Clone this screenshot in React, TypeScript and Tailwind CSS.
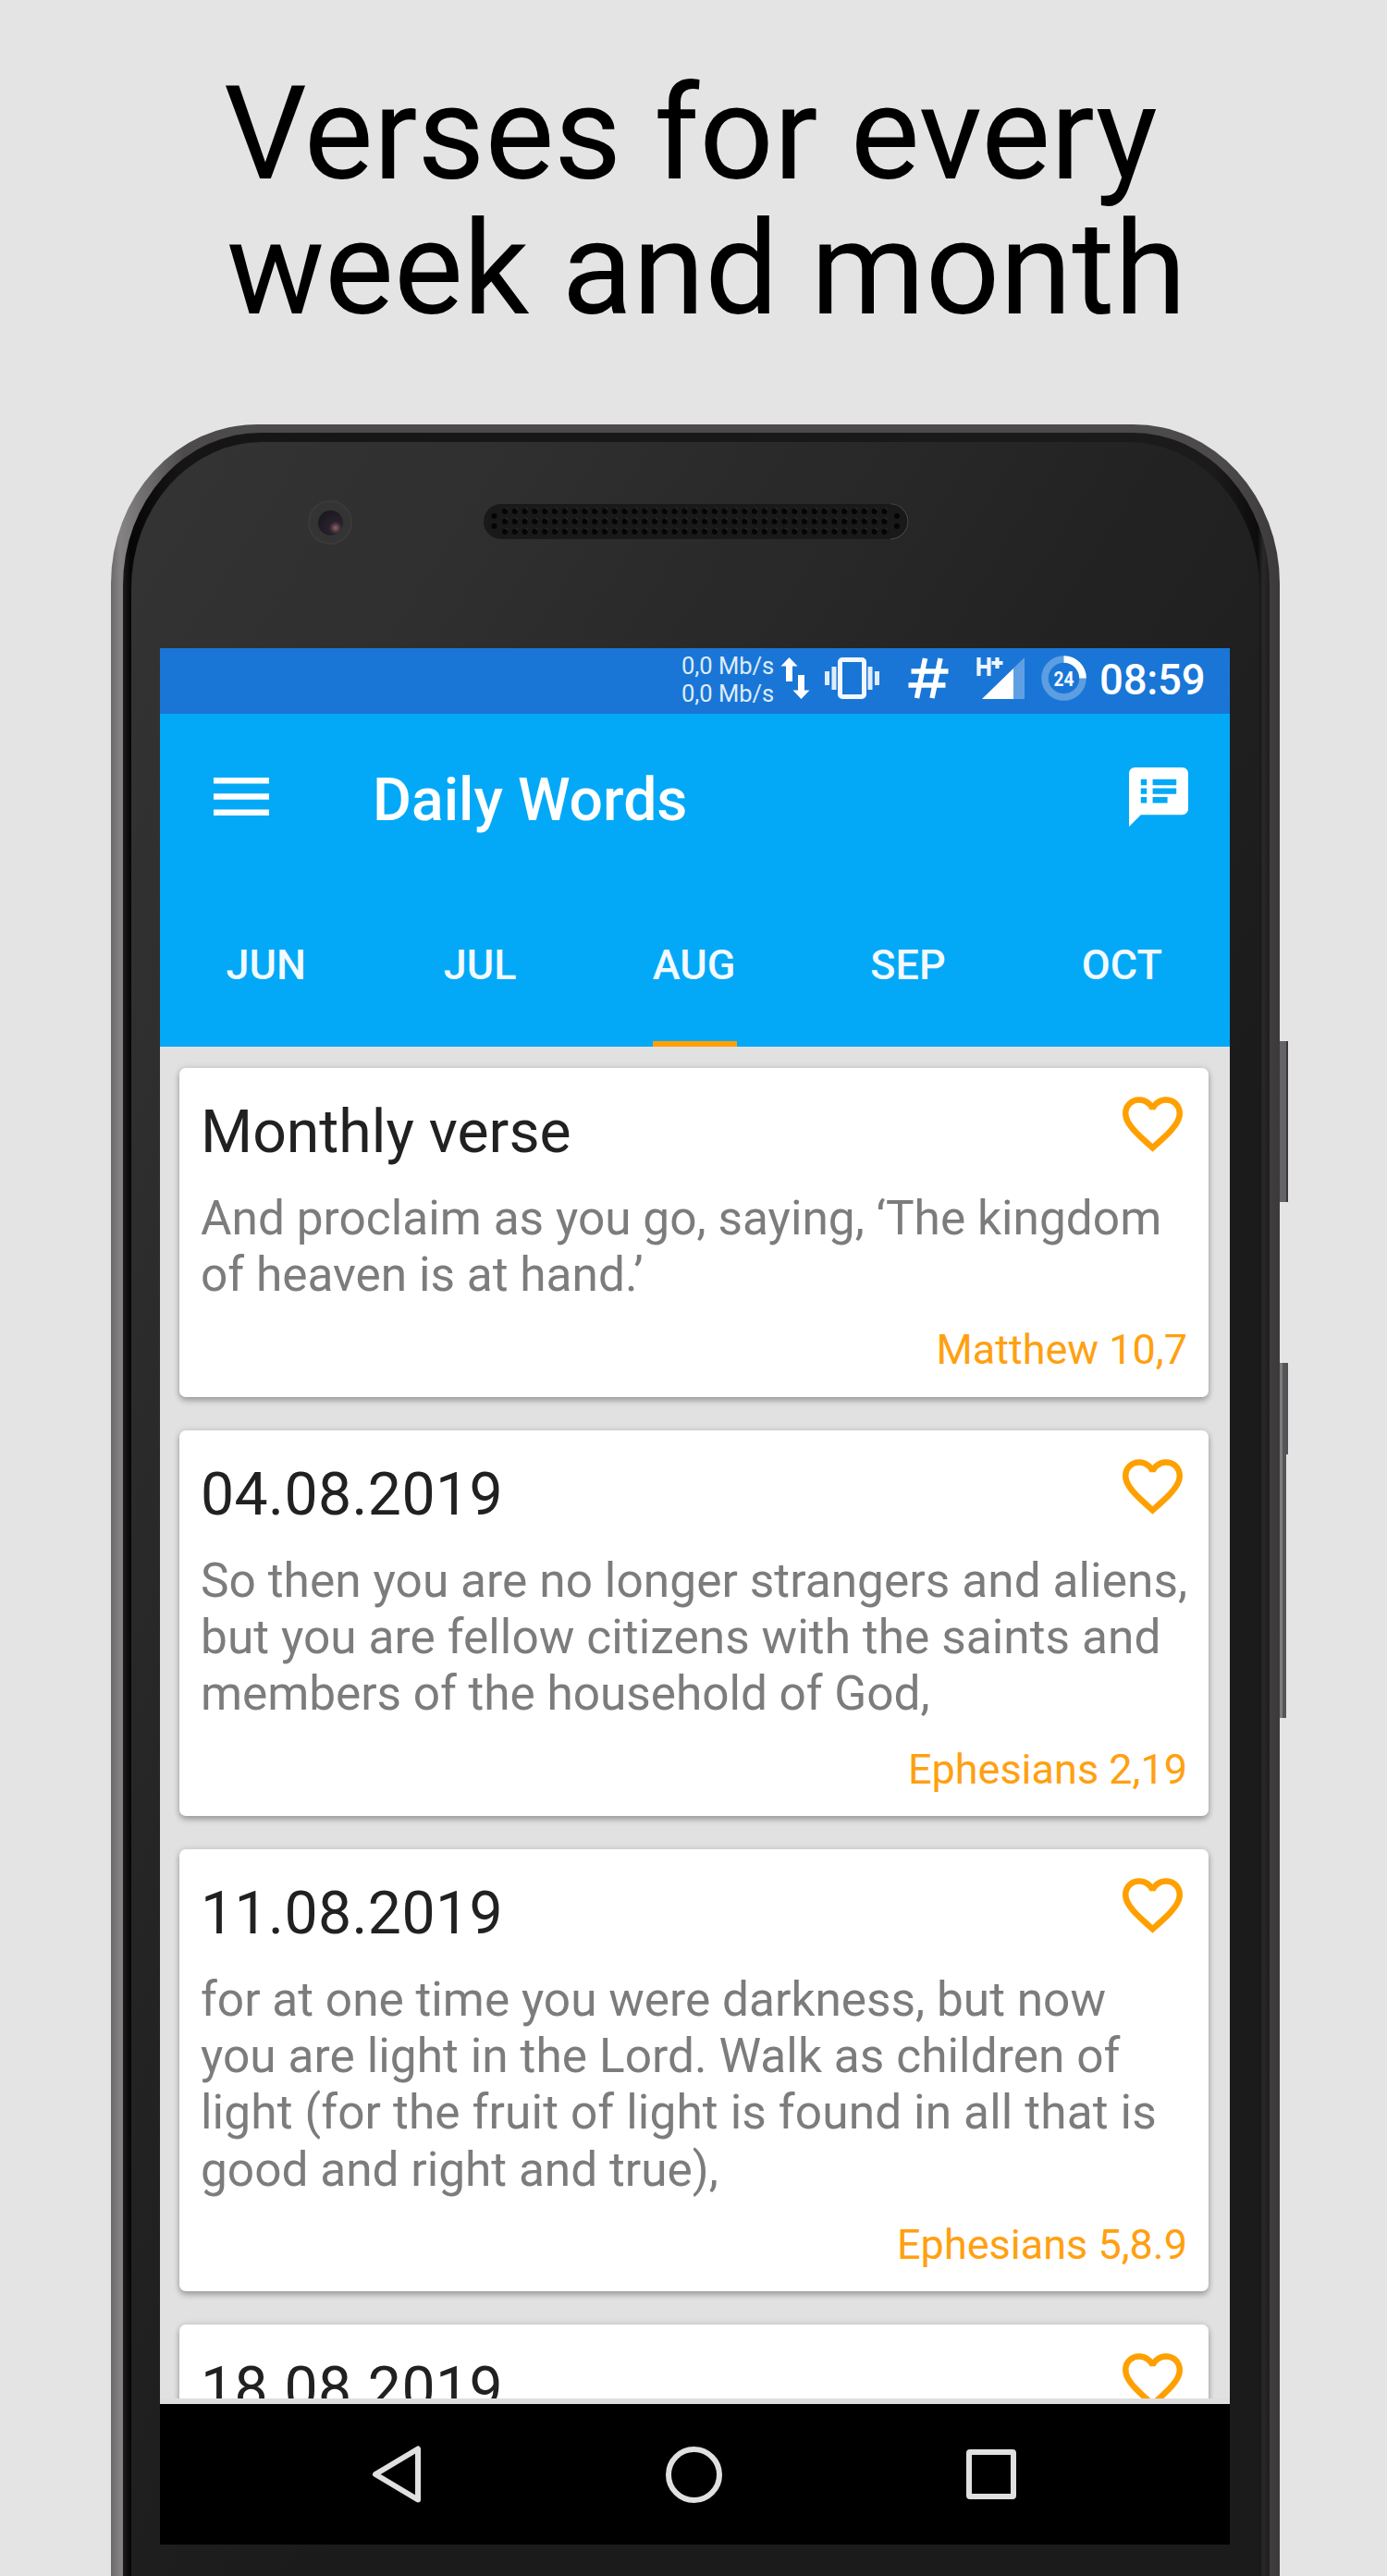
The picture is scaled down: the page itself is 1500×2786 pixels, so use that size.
import type { ReactNode } from "react";

const HEART =
  "M16.5 3c-1.74 0-3.41.81-4.5 2.09C10.91 3.81 9.24 3 7.5 3 4.42 3 2 5.42 2 8.5c0 3.78 3.4 6.86 8.55 11.54L12 21.35l1.45-1.32C18.6 15.36 22 12.28 22 8.5 22 5.42 19.58 3 16.5 3zm-4.4 15.55l-.1.1-.1-.1C7.14 14.24 4 11.39 4 8.5 4 6.5 5.5 5 7.5 5c1.54 0 3.04.99 3.57 2.36h1.87C13.46 5.99 14.96 5 16.5 5c2 0 3.5 1.5 3.5 3.5 0 2.89-3.14 5.74-7.9 10.05z";

const NOTES =
  "M20 2H4c-1.1 0-1.99.9-1.99 2L2 22l4-4h14c1.1 0 2-.9 2-2V4c0-1.1-.9-2-2-2zM8 14H6v-2h2v2zm0-3H6V9h2v2zm0-3H6V6h2v2zm7 6h-5v-2h5v2zm3-3h-8V9h8v2zm0-3h-8V6h8v2z";

type Line = { text: string; tracking?: string };

function VerseCard({
  title,
  titleTracking = "tracking-[0.4px]",
  lines,
  source,
  className,
}: {
  title: string;
  titleTracking?: string;
  lines: Line[];
  source: string;
  className: string;
}) {
  return (
    <article
      className={`flex w-[1113px] shrink-0 flex-col rounded-[7px] bg-white px-[23px] shadow-[0_4px_6px_rgba(0,0,0,0.26),0_0_7px_rgba(0,0,0,0.13)] ${className}`}
    >
      <div className="flex items-start justify-between pt-[31px]">
        <h2 className={`mt-px text-[64.3px] leading-[75px] whitespace-nowrap text-[#212121] ${titleTracking}`}>
          {title}
        </h2>
        <svg viewBox="2 3 20 18.35" className="mr-[5px] h-[60px] w-[65px]" fill="#ffa000">
          <path d={HEART} />
        </svg>
      </div>
      <div className="mt-[25px] text-[51.4px] leading-[61.2px] whitespace-nowrap text-[#7c7c7c]">
        {lines.map((line) => (
          <p key={line.text} className={line.tracking}>
            {line.text}
          </p>
        ))}
      </div>
      <p className="mt-[24px] text-right text-[45px] leading-[53px] text-[#ffa010]">{source}</p>
    </article>
  );
}

function Tab({ children, active }: { children: ReactNode; active?: boolean }) {
  return (
    <div className="flex flex-1 flex-col items-center">
      <span className="mt-[65px] mr-[2px] text-[45px] leading-[53px] font-medium text-[#f2faff]">{children}</span>
      {active && <span className="mt-auto mr-[1px] h-[6px] w-[91px] bg-[#ffa000]" />}
    </div>
  );
}

function StatusBar() {
  return (
    <div className="flex h-[71px] items-start bg-[#1976d6] text-white">
      <div className="ml-[564px] w-[107px] pt-[4px] text-[25.5px] leading-[30.3px] whitespace-nowrap text-[#dfecfa]">
        <p>0,0 Mb/s</p>
        <p>0,0 Mb/s</p>
      </div>
      <svg className="mt-[10px] h-[45px] w-[32px]" viewBox="0 0 32 45" fill="white">
        <path d="M9.500 0L18.500 9.500H13V26H6V9.500H0.500Z" />
        <path d="M22.500 45L13.500 35.500H19V19H26V35.500H31.500Z" />
      </svg>
      <svg className="mt-[10px] ml-[16px] h-[45px] w-[59px]" viewBox="0 0 59 45">
        <rect x="16.500" y="2.500" width="26" height="40" rx="2.500" fill="none" stroke="#f2f8fe" strokeWidth="5" />
        <path d="M0 15h5v15H0zM7.500 10h5v25h-5zM46.500 10h5v25h-5zM54 15h5v15h-5z" fill="#dfecfa" />
      </svg>
      <svg className="mt-[10px] ml-[31px] h-[45px] w-[44px]" viewBox="0 0 44 45" fill="none" stroke="white">
        <path d="M18.500 1L9.500 44M35 1L26 44M3.500 15H43.500M0.500 30H40.500" strokeWidth="5.500" />
      </svg>
      <svg className="mt-[8px] ml-[30px] h-[48px] w-[53px]" viewBox="0 0 53 48">
        <path d="M52 2V47H6Z" fill="#5fa0e2" />
        <path d="M40 14V47H6Z" fill="white" />
        <path d="M2.500 2v20M13.500 2v20M2.500 12h11M16.500 8h12M22.500 2v12" fill="none" stroke="#eef5fd" strokeWidth="4.200" />
      </svg>
      <svg className="mt-[8px] ml-[17px] h-[49px] w-[49px]" viewBox="0 0 49 49">
        <circle cx="24.500" cy="24.500" r="20.500" fill="none" stroke="#5c9ee1" strokeWidth="7.500" />
        <path d="M24.500 4A20.500 20.500 0 0 1 45 24.500" fill="none" stroke="white" strokeWidth="7.500" />
        <text x="24.500" y="32.500" textAnchor="middle" textLength="22" lengthAdjust="spacingAndGlyphs" fill="#f4f9fe" className="font-['Roboto',sans-serif] text-[22px] font-bold">
          24
        </text>
      </svg>
      <span className="mt-[8px] ml-[14px] text-[45.5px] leading-[54px] font-medium tracking-[-0.2px]">08:59</span>
    </div>
  );
}

export default function App() {
  return (
    <div className="relative h-[2786px] w-[1500px] overflow-hidden bg-[#e4e4e4] font-['Roboto',sans-serif]">
      <h1 className="h-[459px] pt-[72px] pl-[242px] text-[141.2px] leading-[146px] whitespace-nowrap text-black">
        <span className="block">Verses for every</span>
        <span className="block pl-[3px]">week and month</span>
      </h1>

      {/* side buttons */}
      <div className="absolute top-[1126px] left-[1380px] h-[174px] w-[13px] border-r-2 border-[#39373a] bg-[#646266]" />
      <div className="absolute top-[1474px] left-[1380px] h-[99px] w-[13px] bg-[#515052]" />
      <div className="absolute top-[1474px] left-[1380px] h-[384px] w-[11px] border-r-4 border-[#555456] bg-[#7c7b7d]" />

      {/* phone body: metal edge, black rim, glass */}
      <div className="relative ml-[120px] h-[2500px] w-[1264px] rounded-t-[158px_172px] bg-[linear-gradient(90deg,#6b696a_0,#858384_10px,#4c4a4b_80px,#4c4a4b_1200px,#3d3a3b_100%)] pt-[9px] pr-[11px] pl-[13px]">
        <div className="h-full rounded-t-[148px_165px] bg-[linear-gradient(90deg,#1c1c1c_0,#060606_8px,#151515_60px,#1b1b1b_1180px,#0c0c0c_1227px,#2a2829_1233px,#1f1e1f_100%)] pt-[10px] pr-[11px] pl-[9px]">
          <div className="h-full rounded-t-[142px_158px] bg-[linear-gradient(122deg,#343435_0%,#2f2f30_15%,#222223_42%,#1b1b1c_60%)] pl-[31px]">
            <div className="flex h-[223px] items-start">
              <div className="mt-[63px] ml-[160px] flex size-[48px] items-center justify-center rounded-full border-2 border-[#3b3a3a] bg-[#343434]">
                <div className="size-[27px] rounded-full bg-[radial-gradient(circle_at_70%_70%,#99655d_0,#5b4147_12%,#28212c_26%,#1c1820_75%)]" />
              </div>
              <svg className="mt-[66px] ml-[141px] h-[40px] w-[462px]" viewBox="0 0 462 40">
                <rect x="1" y="1" width="460" height="38" rx="19" fill="#191919" />
                <path d="M441 1A19 19 0 0 1 441 39" fill="none" stroke="#454545" strokeWidth="1.200" />
                {Array.from({ length: 39 }, (_, i) =>
                  [9, 20, 31].map((y) => (
                    <g key={`${i}-${y}`}>
                      <circle cx={25.5 + i * 10.8} cy={y - 2} r="1.800" fill="#333333" />
                      <circle cx={24 + i * 10.8} cy={y} r="3" fill="#050505" />
                    </g>
                  )),
                )}
                {[12.5, 448].map((x) =>
                  [14, 25].map((y) => <circle key={`${x}-${y}`} cx={x} cy={y} r="3" fill="#050505" />),
                )}
              </svg>
            </div>

            {/* screen */}
            <div className="flex h-[2051px] w-[1157px] flex-col bg-[#e1e1e1]">
              <StatusBar />
              <header className="flex h-[360px] flex-col bg-[#03a9f7]">
                <div className="flex h-[180px] items-start">
                  <svg className="mt-[69px] ml-[58px] h-[41px] w-[60px]" viewBox="0 0 60 41" fill="white">
                    <path d="M0 0h60v6.500H0zM0 17.200h60v6.500H0zM0 34.400h60v6.500H0z" />
                  </svg>
                  <span className="mt-[56px] ml-[112px] text-[64.3px] leading-[75px] font-medium text-white">Daily Words</span>
                  <svg className="mt-[58px] mr-[45px] ml-auto size-[64px]" viewBox="2 2 20 20" fill="white">
                    <path d={NOTES} />
                  </svg>
                </div>
                <nav className="flex flex-1">
                  <Tab>JUN</Tab>
                  <Tab>JUL</Tab>
                  <Tab active>AUG</Tab>
                  <Tab>SEP</Tab>
                  <Tab>OCT</Tab>
                </nav>
              </header>

              <main className="flex h-[1462px] flex-col items-start gap-[36px] overflow-hidden pt-[23px] pl-[21px]">
                <VerseCard
                  className="h-[356px]"
                  title="Monthly verse"
                  titleTracking="tracking-normal"
                  lines={[
                    { text: "And proclaim as you go, saying, ‘The kingdom", tracking: "tracking-[0.02px]" },
                    { text: "of heaven is at hand.’" },
                  ]}
                  source="Matthew 10,7"
                />
                <VerseCard
                  className="h-[417px]"
                  title="04.08.2019"
                  lines={[
                    { text: "So then you are no longer strangers and aliens,", tracking: "tracking-[0.06px]" },
                    { text: "but you are fellow citizens with the saints and", tracking: "tracking-[0.06px]" },
                    { text: "members of the household of God,", tracking: "tracking-[-0.05px]" },
                  ]}
                  source="Ephesians 2,19"
                />
                <VerseCard
                  className="h-[478px]"
                  title="11.08.2019"
                  lines={[
                    { text: "for at one time you were darkness, but now" },
                    { text: "you are light in the Lord. Walk as children of", tracking: "tracking-[0.06px]" },
                    { text: "light (for the fruit of light is found in all that is", tracking: "tracking-[0.12px]" },
                    { text: "good and right and true)," },
                  ]}
                  source="Ephesians 5,8.9"
                />
                <VerseCard className="h-[356px]" title="18.08.2019" lines={[]} source="" />
              </main>

              <div className="h-[6px] bg-[#dedede]" />
              <div className="flex flex-1 items-center justify-center bg-black pr-[2px]">
                <div className="flex w-[321.500px] justify-center">
                  <svg className="h-[64px] w-[56px]" viewBox="0 0 56 64" fill="none" stroke="#e0e0e0" strokeWidth="6" strokeLinejoin="round">
                    <path d="M51 4.500V59.500L5 32Z" />
                  </svg>
                </div>
                <div className="flex w-[321.500px] justify-center">
                  <div className="size-[61px] rounded-full border-[6px] border-[#e0e0e0]" />
                </div>
                <div className="flex w-[321.500px] justify-center">
                  <div className="size-[54px] rounded-[4px] border-[6px] border-[#e0e0e0]" />
                </div>
              </div>
            </div>
          </div>
        </div>
      </div>
    </div>
  );
}
